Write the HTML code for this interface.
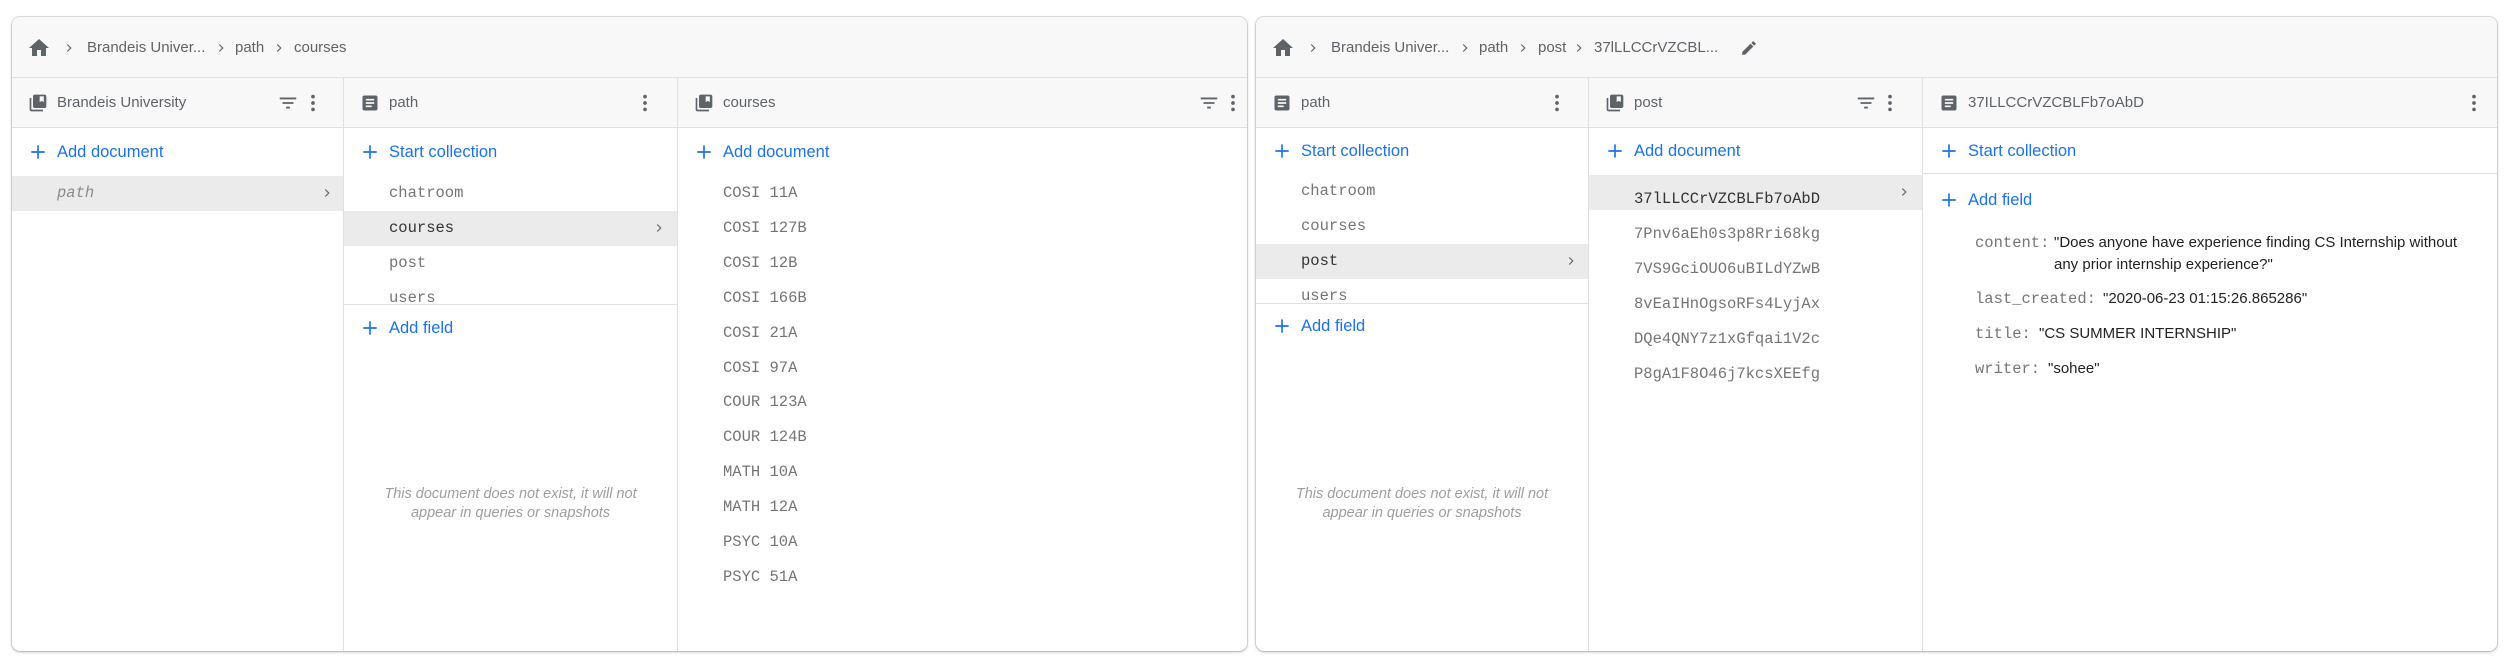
<!DOCTYPE html>
<html><head><meta charset="utf-8"><style>
*{margin:0;padding:0;box-sizing:border-box}
body{width:2510px;height:668px;background:#fff;position:relative;overflow:hidden;font-family:"Liberation Sans",sans-serif;}
.card{position:absolute;top:17px;height:634px;background:#fff;border-radius:8px;box-shadow:0 1px 3px rgba(0,0,0,.25),0 0 0 1px #e4e4e4;overflow:hidden}
.bc{position:absolute;left:0;right:0;top:0;height:61px;background:#f8f8f8;border-bottom:1px solid #e0e0e0}
.a{position:absolute;white-space:nowrap}
.t{font-size:15px;color:#5f6368;line-height:20px}
.col{position:absolute;top:61px;bottom:0;border-right:1px solid #e0e0e0}
.ch{position:absolute;left:0;right:0;top:0;height:50px;background:#f8f8f8;border-bottom:1px solid #e0e0e0}
.blue{color:#1a73e8;font-size:16.5px;line-height:20px}
.mono{font-family:"Liberation Mono",monospace;font-size:15.5px;color:#757575;line-height:20px}
.hl{position:absolute;left:0;right:0;height:35px;background:#ebebeb}
.hr{position:absolute;left:0;right:0;height:1px;background:#e0e0e0}
.msg{position:absolute;left:0;right:0;text-align:center;font-style:italic;color:#9e9e9e;font-size:14.5px;line-height:19px}
.v{font-size:15px;color:#222;line-height:22px}
svg{position:absolute}
</style></head><body>
<svg width="0" height="0"><defs>
<symbol id="home" viewBox="0 0 24 24"><path d="M10 20v-6h4v6h5v-8h3L12 3 2 12h3v8z" fill="#5f6368"/></symbol>
<symbol id="chev" viewBox="0 0 24 24"><path d="M9 6l6 6-6 6" fill="none" stroke="#5f6368" stroke-width="2"/></symbol>
<symbol id="coll" viewBox="0 0 24 24"><path d="M4 6H2v14c0 1.1.9 2 2 2h14v-2H4V6zm16-4H8c-1.1 0-2 .9-2 2v12c0 1.1.9 2 2 2h12c1.1 0 2-.9 2-2V4c0-1.1-.9-2-2-2zm-1 9l-2.5-1.5L14 11V4h5v7z" fill="#5f6368"/></symbol>
<symbol id="doc" viewBox="0 0 24 24"><path d="M19 3H5c-1.1 0-2 .9-2 2v14c0 1.1.9 2 2 2h14c1.1 0 2-.9 2-2V5c0-1.1-.9-2-2-2zm-5 14H7v-2h7v2zm3-4H7v-2h10v2zm0-4H7V7h10v2z" fill="#5f6368"/></symbol>
<symbol id="filt" viewBox="0 0 24 24"><path d="M10 18h4v-2h-4v2zM3 6v2h18V6H3zm3 7h12v-2H6v2z" fill="#5f6368"/></symbol>
<symbol id="kebab" viewBox="0 0 24 24"><circle cx="12" cy="5" r="2" fill="#5f6368"/><circle cx="12" cy="12" r="2" fill="#5f6368"/><circle cx="12" cy="19" r="2" fill="#5f6368"/></symbol>
<symbol id="plus" viewBox="0 0 24 24"><path d="M12 4v16M4 12h16" stroke="#1a73e8" stroke-width="2"/></symbol>
<symbol id="pen" viewBox="0 0 24 24"><path d="M3 17.25V21h3.75L17.81 9.94l-3.75-3.75L3 17.25zM20.71 7.04a1 1 0 000-1.41l-2.34-2.34a1 1 0 00-1.41 0l-1.830 1.83 3.75 3.75 1.83-1.83z" fill="#5f6368"/></symbol>
</defs></svg>

<!-- CARD 1 -->
<div class="card" style="left:12px;width:1235px">
 <div class="bc">
  <svg style="left:15px;top:19px" width="24" height="24"><use href="#home"/></svg>
  <svg style="left:50px;top:24px" width="14" height="14"><use href="#chev"/></svg>
  <div class="a t" style="left:75px;top:21px">Brandeis Univer...</div>
  <svg style="left:202px;top:24px" width="14" height="14"><use href="#chev"/></svg>
  <div class="a t" style="left:223px;top:21px">path</div>
  <svg style="left:260px;top:24px" width="14" height="14"><use href="#chev"/></svg>
  <div class="a t" style="left:282px;top:21px">courses</div>
 </div>
 <div class="col" style="left:0;width:332px">
  <div class="ch">
   <svg style="left:16px;top:15px" width="20" height="20"><use href="#coll"/></svg>
   <div class="a t" style="left:45px;top:15px">Brandeis University</div>
   <svg style="left:265px;top:14px" width="22" height="22"><use href="#filt"/></svg>
   <svg style="left:290px;top:14px" width="22" height="22"><use href="#kebab"/></svg>
  </div>
  <svg style="left:16px;top:64px" width="20" height="20"><use href="#plus"/></svg>
  <div class="a blue" style="left:45px;top:64px">Add document</div>
  <div class="hl" style="top:98px"></div>
  <div class="a mono" style="left:45px;top:105px;font-style:italic;color:#8a8a8a">path</div>
  <svg style="left:308px;top:108px" width="14" height="14"><use href="#chev"/></svg>
 </div>
 <div class="col" style="left:332px;width:334px">
  <div class="ch">
   <svg style="left:16px;top:15px" width="20" height="20"><use href="#doc"/></svg>
   <div class="a t" style="left:45px;top:15px">path</div>
   <svg style="left:290px;top:14px" width="22" height="22"><use href="#kebab"/></svg>
  </div>
  <svg style="left:16px;top:64px" width="20" height="20"><use href="#plus"/></svg>
  <div class="a blue" style="left:45px;top:64px">Start collection</div>
  <div class="a mono" style="left:45px;top:105px">chatroom</div>
  <div class="hl" style="top:133px"></div>
  <div class="a mono" style="left:45px;top:140px;color:#333">courses</div>
  <svg style="left:308px;top:143px" width="14" height="14"><use href="#chev"/></svg>
  <div class="a mono" style="left:45px;top:175px">post</div>
  <div class="a mono" style="left:45px;top:210px">users</div>
  <div class="hr" style="top:226px;height:200px;background:#fff;border-top:1px solid #e0e0e0"></div>
  <svg style="left:16px;top:240px" width="20" height="20"><use href="#plus"/></svg>
  <div class="a blue" style="left:45px;top:240px">Add field</div>
  <div class="msg" style="top:407px">This document does not exist, it will not<br>appear in queries or snapshots</div>
 </div>
 <div class="col" style="left:666px;width:569px;border-right:none">
  <div class="ch">
   <svg style="left:16px;top:15px" width="20" height="20"><use href="#coll"/></svg>
   <div class="a t" style="left:45px;top:15px">courses</div>
   <svg style="left:520px;top:14px" width="22" height="22"><use href="#filt"/></svg>
   <svg style="left:544px;top:14px" width="22" height="22"><use href="#kebab"/></svg>
  </div>
  <svg style="left:16px;top:64px" width="20" height="20"><use href="#plus"/></svg>
  <div class="a blue" style="left:45px;top:64px">Add document</div>
  <div class="a mono" style="left:45px;top:98px;line-height:34.9px">COSI 11A<br>COSI 127B<br>COSI 12B<br>COSI 166B<br>COSI 21A<br>COSI 97A<br>COUR 123A<br>COUR 124B<br>MATH 10A<br>MATH 12A<br>PSYC 10A<br>PSYC 51A</div>
 </div>
</div>

<!-- CARD 2 -->
<div class="card" style="left:1256px;width:1241px">
 <div class="bc">
  <svg style="left:15px;top:19px" width="24" height="24"><use href="#home"/></svg>
  <svg style="left:50px;top:24px" width="14" height="14"><use href="#chev"/></svg>
  <div class="a t" style="left:75px;top:21px">Brandeis Univer...</div>
  <svg style="left:202px;top:24px" width="14" height="14"><use href="#chev"/></svg>
  <div class="a t" style="left:223px;top:21px">path</div>
  <svg style="left:260px;top:24px" width="14" height="14"><use href="#chev"/></svg>
  <div class="a t" style="left:282px;top:21px">post</div>
  <svg style="left:316px;top:24px" width="14" height="14"><use href="#chev"/></svg>
  <div class="a t" style="left:338px;top:21px">37lLLCCrVZCBL...</div>
  <svg style="left:484px;top:22px" width="18" height="18"><use href="#pen"/></svg>
 </div>
 <div class="col" style="left:0;width:333px">
  <div class="ch">
   <svg style="left:16px;top:15px" width="20" height="20"><use href="#doc"/></svg>
   <div class="a t" style="left:45px;top:15px">path</div>
   <svg style="left:290px;top:14px" width="22" height="22"><use href="#kebab"/></svg>
  </div>
  <svg style="left:16px;top:63px" width="20" height="20"><use href="#plus"/></svg>
  <div class="a blue" style="left:45px;top:63px">Start collection</div>
  <div class="a mono" style="left:45px;top:103px">chatroom</div>
  <div class="a mono" style="left:45px;top:138px">courses</div>
  <div class="hl" style="top:166px"></div>
  <div class="a mono" style="left:45px;top:173px;color:#333">post</div>
  <svg style="left:308px;top:176px" width="14" height="14"><use href="#chev"/></svg>
  <div class="a mono" style="left:45px;top:208px">users</div>
  <div class="hr" style="top:225px;height:200px;background:#fff;border-top:1px solid #e0e0e0"></div>
  <svg style="left:16px;top:238px" width="20" height="20"><use href="#plus"/></svg>
  <div class="a blue" style="left:45px;top:238px">Add field</div>
  <div class="msg" style="top:407px">This document does not exist, it will not<br>appear in queries or snapshots</div>
 </div>
 <div class="col" style="left:333px;width:334px">
  <div class="ch">
   <svg style="left:16px;top:15px" width="20" height="20"><use href="#coll"/></svg>
   <div class="a t" style="left:45px;top:15px">post</div>
   <svg style="left:266px;top:14px" width="22" height="22"><use href="#filt"/></svg>
   <svg style="left:290px;top:14px" width="22" height="22"><use href="#kebab"/></svg>
  </div>
  <svg style="left:16px;top:63px" width="20" height="20"><use href="#plus"/></svg>
  <div class="a blue" style="left:45px;top:63px">Add document</div>
  <div class="hl" style="top:97px"></div>
  <svg style="left:308px;top:107px" width="14" height="14"><use href="#chev"/></svg>
  <div class="a mono" style="left:45px;top:104px;line-height:35px"><span style="color:#333">37lLLCCrVZCBLFb7oAbD</span><br>7Pnv6aEh0s3p8Rri68kg<br>7VS9GciOUO6uBILdYZwB<br>8vEaIHnOgsoRFs4LyjAx<br>DQe4QNY7z1xGfqai1V2c<br>P8gA1F8O46j7kcsXEEfg</div>
 </div>
 <div class="col" style="left:667px;width:574px;border-right:none">
  <div class="ch">
   <svg style="left:16px;top:15px" width="20" height="20"><use href="#doc"/></svg>
   <div class="a t" style="left:45px;top:15px">37ILLCCrVZCBLFb7oAbD</div>
   <svg style="left:540px;top:14px" width="22" height="22"><use href="#kebab"/></svg>
  </div>
  <svg style="left:16px;top:63px" width="20" height="20"><use href="#plus"/></svg>
  <div class="a blue" style="left:45px;top:63px">Start collection</div>
  <div class="hr" style="top:95px"></div>
  <svg style="left:16px;top:112px" width="20" height="20"><use href="#plus"/></svg>
  <div class="a blue" style="left:45px;top:112px">Add field</div>
  <div class="a mono" style="left:52px;top:155px">content:</div>
  <div class="a v" style="left:131px;top:154px">"Does anyone have experience finding CS Internship without<br>any prior internship experience?"</div>
  <div class="a mono" style="left:52px;top:211px">last_created:</div>
  <div class="a v" style="left:180px;top:210px">"2020-06-23 01:15:26.865286"</div>
  <div class="a mono" style="left:52px;top:246px">title:</div>
  <div class="a v" style="left:116px;top:245px">"CS SUMMER INTERNSHIP"</div>
  <div class="a mono" style="left:52px;top:281px">writer:</div>
  <div class="a v" style="left:125px;top:280px">"sohee"</div>
 </div>
</div>
</body></html>
